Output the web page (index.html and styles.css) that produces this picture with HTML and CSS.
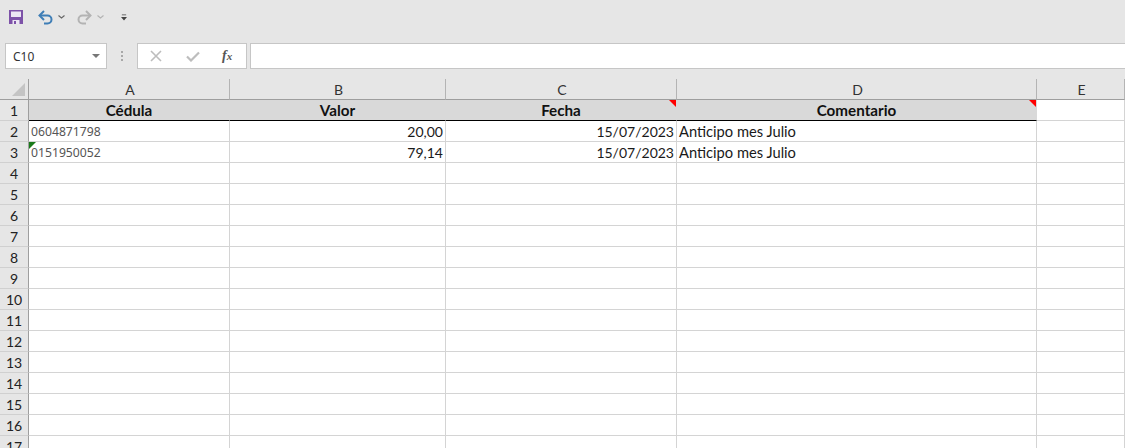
FILE: index.html
```html
<!DOCTYPE html>
<html lang="es">
<head>
<meta charset="utf-8">
<title>Hoja de cálculo</title>
<link rel="stylesheet" href="styles.css">
</head>
<body>
<div class="app">
  <div class="qat">
    <svg class="ico-save" width="14" height="14" viewBox="0 0 14 14"><path fill="#7d52a8" d="M0 0h14v14H0z"/><path fill="#ece6f3" d="M2 1.500h10v5.500H2z"/><path fill="#ece6f3" d="M3.500 10h7v4h-7z"/><path fill="#7d52a8" d="M5 11h2v3H5z"/></svg>
    <svg class="ico-undo" width="15" height="15" viewBox="0 0 15 15"><path fill="none" stroke="#3f7eb6" stroke-width="2" d="M2 5.500h7.500a4 4 0 0 1 0 8H6"/><path fill="none" stroke="#3f7eb6" stroke-width="2" d="M6 1L1.500 5.500 6 10"/></svg>
    <svg class="ico-caret" width="7" height="4" viewBox="0 0 7 4"><path fill="none" stroke="#666" stroke-width="1.1" d="M.5.5l3 2.500 3-2.500"/></svg>
    <svg class="ico-redo" width="15" height="15" viewBox="0 0 15 15"><path fill="none" stroke="#b3b3b3" stroke-width="2" d="M13 5.500H5.500a4 4 0 0 0 0 8H9"/><path fill="none" stroke="#b3b3b3" stroke-width="2" d="M9 1l4.500 4.500L9 10"/></svg>
    <svg class="ico-caret" width="7" height="4" viewBox="0 0 7 4"><path fill="none" stroke="#b3b3b3" stroke-width="1.1" d="M.5.5l3 2.500 3-2.500"/></svg>
    <svg class="ico-more" width="6" height="7" viewBox="0 0 7 7"><path fill="#444" d="M1 0h5v1H1zM0 3h7L3.500 7z"/></svg>
  </div>
  <div class="fbar">
    <div class="namebox"><span>C10</span><i class="nb-arrow"></i></div>
    <div class="grip"><i></i><i></i><i></i></div>
    <div class="fbtns">
      <svg width="12" height="12" viewBox="0 0 12 12"><path fill="none" stroke="#bdbdbd" stroke-width="1.6" d="M1 1l10 10M11 1L1 11"/></svg>
      <svg class="ico-check" width="14" height="11" viewBox="0 0 14 11"><path fill="none" stroke="#bdbdbd" stroke-width="2.2" d="M1 5.500l4 4 8-8"/></svg>
      <span class="fx">f<small>x</small></span>
    </div>
    <div class="finput"></div>
  </div>
  <div class="sheet">
    <div class="corner"><i></i></div><div class="ch">A</div><div class="ch">B</div><div class="ch">C</div><div class="ch">D</div><div class="ch">E</div>

    <div class="rh">1</div><div class="c th">Cédula</div><div class="c th">Valor</div><div class="c th note">Fecha</div><div class="c th note">Comentario</div><div class="c e1"></div>

    <div class="rh">2</div><div class="c id">0604871798</div><div class="c num">20,00</div><div class="c num">15/07/2023</div><div class="c txt">Anticipo mes Julio</div><div class="c"></div>
    <div class="rh">3</div><div class="c id flag">0151950052</div><div class="c num">79,14</div><div class="c num">15/07/2023</div><div class="c txt">Anticipo mes Julio</div><div class="c"></div>

    <div class="rh">4</div><div class="c"></div><div class="c"></div><div class="c"></div><div class="c"></div><div class="c"></div>
    <div class="rh">5</div><div class="c"></div><div class="c"></div><div class="c"></div><div class="c"></div><div class="c"></div>
    <div class="rh">6</div><div class="c"></div><div class="c"></div><div class="c"></div><div class="c"></div><div class="c"></div>
    <div class="rh">7</div><div class="c"></div><div class="c"></div><div class="c"></div><div class="c"></div><div class="c"></div>
    <div class="rh">8</div><div class="c"></div><div class="c"></div><div class="c"></div><div class="c"></div><div class="c"></div>
    <div class="rh">9</div><div class="c"></div><div class="c"></div><div class="c"></div><div class="c"></div><div class="c"></div>
    <div class="rh">10</div><div class="c"></div><div class="c"></div><div class="c"></div><div class="c"></div><div class="c"></div>
    <div class="rh">11</div><div class="c"></div><div class="c"></div><div class="c"></div><div class="c"></div><div class="c"></div>
    <div class="rh">12</div><div class="c"></div><div class="c"></div><div class="c"></div><div class="c"></div><div class="c"></div>
    <div class="rh">13</div><div class="c"></div><div class="c"></div><div class="c"></div><div class="c"></div><div class="c"></div>
    <div class="rh">14</div><div class="c"></div><div class="c"></div><div class="c"></div><div class="c"></div><div class="c"></div>
    <div class="rh">15</div><div class="c"></div><div class="c"></div><div class="c"></div><div class="c"></div><div class="c"></div>
    <div class="rh">16</div><div class="c"></div><div class="c"></div><div class="c"></div><div class="c"></div><div class="c"></div>
    <div class="rh">17</div><div class="c"></div><div class="c"></div><div class="c"></div><div class="c"></div><div class="c"></div>
  </div>
</div>
</body>
</html>
```
FILE: styles.css
```css
* { box-sizing: border-box; }
html, body { margin: 0; height: 448px; overflow: hidden; background: #fff; }
body { font-family: "Lato", "Liberation Sans", sans-serif; color: #1a1a1a; }
.app { width: 1125px; height: 448px; overflow: hidden; display: flex; flex-direction: column; }

.qat { flex: none; height: 43px; background: #e6e6e6; display: flex; align-items: center; padding: 0 0 9px 9px; }
.ico-save + .ico-undo { margin-left: 15px; }
.ico-caret { margin-left: 5px; }
.ico-redo { margin-left: 12px; }
.ico-more { margin-left: 17px; }

.fbar { flex: none; height: 36px; background: #e6e6e6; display: flex; align-items: flex-start; padding-left: 5px; }
.namebox { width: 102px; height: 26px; background: #fff; border: 1px solid #c6c6c6; display: flex; align-items: center; justify-content: space-between; padding: 0 6px 0 7px; font-family: "Noto Sans", sans-serif; font-size: 12px; color: #333; }
.nb-arrow { width: 0; height: 0; border-left: 4px solid transparent; border-right: 4px solid transparent; border-top: 4px solid #777; }
.grip { width: 30px; height: 26px; display: flex; flex-direction: column; align-items: center; justify-content: center; gap: 2px; }
.grip i { width: 2px; height: 2px; background: #a8a8a8; }
.fbtns { width: 110px; height: 26px; background: #fff; border: 1px solid #c6c6c6; display: flex; align-items: center; padding-left: 12px; }
.ico-check { margin-left: 24px; }
.fx { margin-left: 22px; font-family: "Liberation Serif", serif; font-style: italic; font-size: 14px; color: #555; font-weight: 700; }
.fx small { font-size: 11px; }
.finput { flex: 1; height: 26px; margin-left: 3px; background: #fff; border: 1px solid #c6c6c6; border-right: 0; }

.sheet { flex: none; display: grid; grid-template-columns: 29px 201px 216px 231px 360px 88px; grid-template-rows: repeat(18, 21px); }
.corner, .ch { background: #e6e6e6; border-right: 1px solid #b4b4b4; border-bottom: 1px solid #9e9e9e; }
.corner { position: relative; border-right-color: #9e9e9e; }
.corner i { position: absolute; right: 3px; bottom: 3px; width: 13px; height: 13px; background: #c4c4c4; clip-path: polygon(100% 0, 100% 100%, 0 100%); }
.ch { display: flex; align-items: center; justify-content: center; font-size: 14px; color: #333; padding: 1px 0 0 2px; }
.ch:last-child { border-right: 0; }
.rh { background: #e6e6e6; border-right: 1px solid #9e9e9e; border-bottom: 1px solid #d0d0d0; display: flex; align-items: center; justify-content: center; font-size: 14px; color: #222; }
.c { position: relative; border-right: 1px solid #d4d4d4; border-bottom: 1px solid #d4d4d4; display: flex; align-items: center; font-size: 14px; white-space: nowrap; overflow: visible; }
.th { background: #d9d9d9; border-right-color: #d9d9d9; border-bottom: 1px solid #000; justify-content: center; font-weight: 700; font-size: 15.2px; color: #111; }
.num { justify-content: flex-end; padding-right: 2px; }
.txt { padding-left: 2px; font-size: 14.7px; }
.id { padding: 1px 0 0 2px; font-family: "Noto Sans", sans-serif; font-size: 12.2px; color: #555; }
.note::after, .flag::before { content: ""; position: absolute; width: 7px; height: 7px; }
.note::after { top: 0; right: 0; background: #f00; clip-path: polygon(0 0, 100% 0, 100% 100%); }
.flag::before { top: 0; left: 0; background: #1a7a1a; clip-path: polygon(0 0, 100% 0, 0 100%); }
.e1 { border-right-color: #d4d4d4; }
```
